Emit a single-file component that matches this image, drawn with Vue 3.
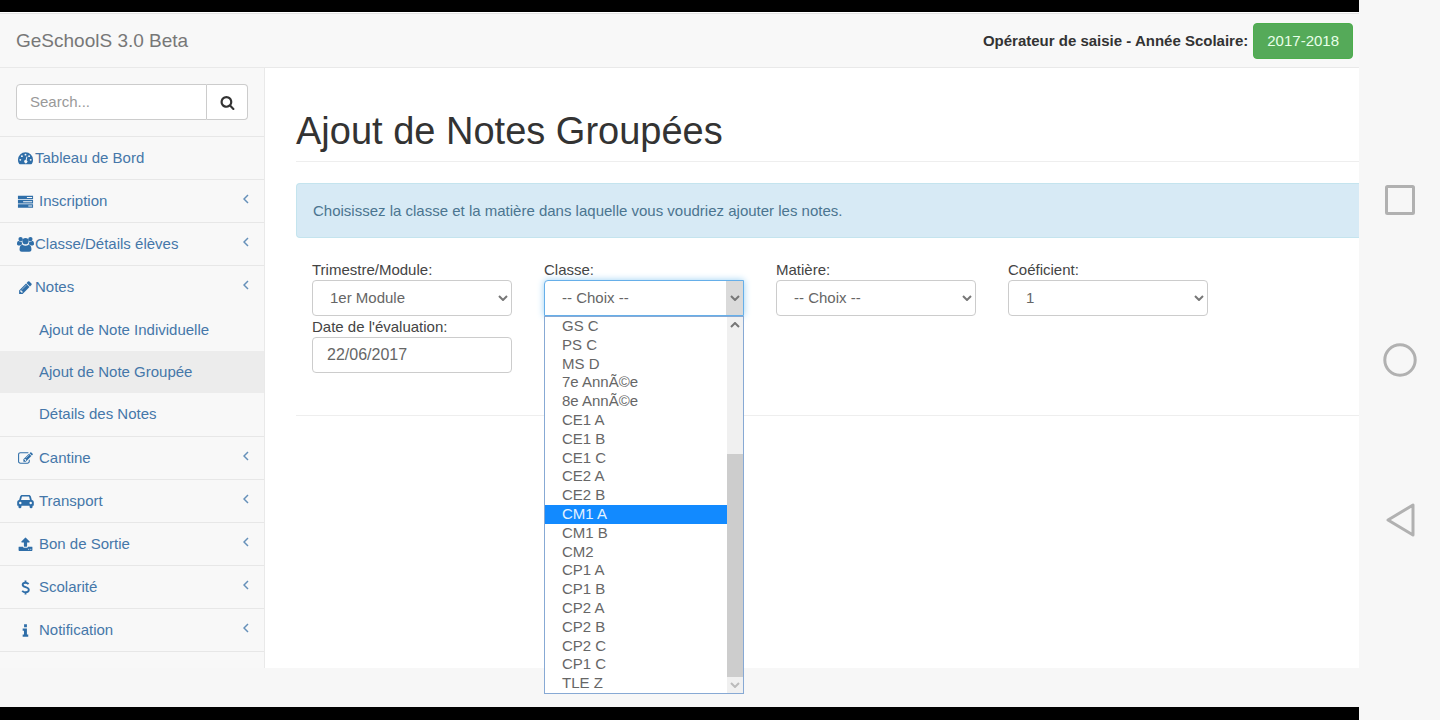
<script setup>
import { ref } from 'vue'

const menu = [
  { label: 'Tableau de Bord', icon: 'gauge', tight: true },
  { label: 'Inscription', icon: 'tasks', more: true },
  { label: 'Classe/Détails élèves', icon: 'users', tight: true, more: true },
  {
    label: 'Notes', icon: 'pencil', tight: true, more: true,
    children: [
      { label: 'Ajout de Note Individuelle' },
      { label: 'Ajout de Note Groupée', active: true },
      { label: 'Détails des Notes' }
    ]
  },
  { label: 'Cantine', icon: 'edit', more: true },
  { label: 'Transport', icon: 'car', more: true },
  { label: 'Bon de Sortie', icon: 'upload', more: true },
  { label: 'Scolarité', icon: 'dollar', more: true },
  { label: 'Notification', icon: 'info', more: true }
]

const icons = {
  gauge: { box: '0 0 18 18', d: 'M9 2.500a8 8 0 0 0-8 8c0 1.500.4 2.900 1.200 4.100.2.300.4.400.8.400h12c.4 0 .6-.1.8-.4.8-1.200 1.200-2.600 1.200-4.100a8 8 0 0 0-8-8zM3.500 9.400a1 1 0 1 1 0 2 1 1 0 0 1 0-2zm1.700-3.900a1 1 0 1 1 0 2 1 1 0 0 1 0-2zM9 3.900a1 1 0 1 1 0 2 1 1 0 0 1 0-2zm3.800 1.600a1 1 0 1 1 0 2 1 1 0 0 1 0-2zm1.700 3.900a1 1 0 1 1 0 2 1 1 0 0 1 0-2zM10.100 6.800l.9.200-.8 3.800a1.700 1.700 0 1 1-1.100-.2z' },
  tasks: { box: '0 0 18 18', d: 'M1 3h16v3.500H1zM10.500 4.200v1.100h5.500V4.200zM1 7.500h16v3.500H1zM6.500 8.700v1.100H16V8.700zM1 12h16v3.500H1zM12 13.200v1.100h4v-1.100z' },
  users: { box: '0 0 18 18', rule: 'nonzero', d: 'M3.800 1a2.300 2.300 0 1 1 0 4.600 2.300 2.300 0 0 1 0-4.600zM14.200 1a2.300 2.300 0 1 1 0 4.600 2.300 2.300 0 0 1 0-4.600zM9 2.200a3.300 3.300 0 1 1 0 6.600 3.300 3.300 0 0 1 0-6.600zM2 5.300c1 .8 2 .9 3.100.5-.2 1.200 0 2.200.6 3.100-1 0-1.800.4-2.400 1.200H1.900C.8 10.100 0 9.500 0 8.500c0-1.500.3-3.500 2-3.200zM16 5.300c-1 .8-2 .9-3.100.5.2 1.200 0 2.200-.6 3.100 1 0 1.800.4 2.400 1.200h1.400c1.100 0 1.900-.6 1.900-1.600 0-1.500-.3-3.500-2-3.200zM5.700 9.200c2 1.400 4.600 1.400 6.600 0 2.300 0 3 2.400 3 5.200 0 1.500-1 2.400-2.300 2.400H5c-1.300 0-2.300-.9-2.300-2.400 0-2.800.7-5.200 3-5.200z' },
  pencil: { box: '-128 -128 2048 2048', d: 'M491 1536l91-91-235-235-91 91v107h128v128h107zm523-928q0-22-22-22-10 0-17 7l-542 542q-7 7-7 17 0 22 22 22 10 0 17-7l542-542q7-7 7-17zm-54-192l416 416-832 832h-416v-416zm683 96q0 53-37 90l-166 166-416-416 166-165q36-38 90-38 53 0 91 38l235 234q37 39 37 91z' },
  edit: { box: '-128 -128 2048 2048', d: 'M888 1184l116-116-152-152-116 116v56h96v96h56zm440-720q-16-16-33 1l-350 350q-17 17-1 33t33-1l350-350q17-17 1-33zm80 594v190q0 119-84.500 203.500t-203.500 84.500h-832q-119 0-203.500-84.500t-84.500-203.500v-832q0-119 84.500-203.500t203.500-84.500h832q63 0 117 25 15 7 18 23 3 17-9 29l-49 49q-14 14-32 8-23-6-45-6h-832q-66 0-113 47t-47 113v832q0 66 47 113t113 47h832q66 0 113-47t47-113v-126q0-13 9-22l64-64q15-15 35-7t20 29zm-96-738l288 288-672 672h-288v-288zm444 132l-92 92-288-288 92-92q28-28 68-28t68 28l152 152q28 28 28 68t-28 68z' },
  car: { box: '0 0 18 18', d: 'M5.500 2h7c1.100 0 1.900.7 2.200 1.700l1 3.700c1.300.2 2.100 1.200 2.100 2.400v3.200c0 .3-.2.500-.5.500h-.8v1a1.600 1.600 0 0 1-3.200 0v-1H4.700v1a1.600 1.600 0 0 1-3.200 0v-1H.7c-.3 0-.5-.2-.5-.5V9.800c0-1.200.8-2.200 2.100-2.400l1-3.700C3.600 2.700 4.400 2 5.500 2zm.2 1.800c-.3 0-.5.1-.6.400l-.8 3.100h9.400l-.8-3.100c-.1-.3-.3-.4-.6-.4zM3.500 9.200a1.300 1.300 0 1 0 0 2.600 1.300 1.300 0 0 0 0-2.600zm11 0a1.300 1.300 0 1 0 0 2.600 1.300 1.300 0 0 0 0-2.600z' },
  upload: { box: '-128 -128 2048 2048', d: 'M1344 1472q0-26-19-45t-45-19-45 19-19 45 19 45 45 19 45-19 19-45zm256 0q0-26-19-45t-45-19-45 19-19 45 19 45 45 19 45-19 19-45zm128-224v320q0 40-28 68t-68 28h-1472q-40 0-68-28t-28-68v-320q0-40 28-68t68-28h427q21 56 70.500 92t110.500 36h256q61 0 110.500-36t70.500-92h427q40 0 68 28t28 68zm-325-648q-17 40-59 40h-256v448q0 26-19 45t-45 19h-256q-26 0-45-19t-19-45v-448h-256q-42 0-59-40-17-39 14-69l448-448q18-19 45-19t45 19l448 448q31 30 14 69z' },
  dollar: { box: '0 0 18 18', line: 'M12.300 5.300C11.300 4.300 10.200 3.900 9 3.900c-1.700 0-3 .9-3 2.300 0 3.100 6.500 1.900 6.500 5.300 0 1.700-1.500 2.600-3.400 2.600-1.400 0-2.700-.6-3.600-1.600M9 1.500v2.500M9 14v2.500' },
  info: { box: '0 0 18 18', d: 'M7.500 2.500h3v3h-3zM6 7h4.500v6.200h1.400v2.300H6v-2.300h1.400V9.300H6z' }
}

const classes = [
  'GS C', 'PS C', 'MS D', '7e AnnÃ©e', '8e AnnÃ©e', 'CE1 A', 'CE1 B', 'CE1 C', 'CE2 A', 'CE2 B',
  'CM1 A', 'CM1 B', 'CM2', 'CP1 A', 'CP1 B', 'CP2 A', 'CP2 B', 'CP2 C', 'CP1 C', 'TLE Z'
]
const highlighted = ref('CM1 A')

const fields = [
  { id: 'trimestre', label: 'Trimestre/Module:', value: '1er Module' },
  { id: 'classe', label: 'Classe:', value: '-- Choix --', open: true },
  { id: 'matiere', label: 'Matière:', value: '-- Choix --' },
  { id: 'coef', label: 'Coéficient:', value: '1' }
]
const date = ref('22/06/2017')
const search = ref('')
</script>

<template>
  <div class="device">
    <div class="screen">
      <header class="topbar">
        <a class="brand" href="#">GeSchoolS 3.0 Beta</a>
        <div class="session">
          <strong>Opérateur de saisie - Année Scolaire:</strong>
          <button class="year" type="button">2017-2018</button>
        </div>
      </header>

      <div class="body">
        <aside class="sidebar">
          <form class="search" @submit.prevent>
            <input v-model="search" type="text" placeholder="Search..." aria-label="Search">
            <button type="submit" aria-label="Search">
              <svg viewBox="0 0 1792 1792"><path d="M1216 832q0-185-131.500-316.500t-316.500-131.500-316.500 131.500-131.500 316.500 131.500 316.500 316.500 131.500 316.500-131.500 131.500-316.500zm512 832q0 52-38 90t-90 38q-54 0-90-38l-343-342q-179 124-399 124-143 0-273.500-55.500t-225-150-150-225-55.500-273.500 55.500-273.500 150-225 225-150 273.500-55.500 273.500 55.500 225 150 150 225 55.500 273.500q0 220-124 399l343 343q37 37 37 90z" /></svg>
            </button>
          </form>
          <nav>
            <ul class="menu">
              <li v-for="item in menu" :key="item.label">
                <a href="#" class="entry" :class="{ tight: item.tight }">
                  <svg class="icon" :viewBox="icons[item.icon].box" aria-hidden="true">
                    <path v-if="icons[item.icon].d" :d="icons[item.icon].d" :fill-rule="icons[item.icon].rule || 'evenodd'" />
                    <path v-else class="line" :d="icons[item.icon].line" />
                  </svg>
                  <span>{{ item.label }}</span>
                  <svg v-if="item.more" class="arrow" viewBox="0 0 6 10" aria-hidden="true"><path d="M5 1 1 5l4 4" /></svg>
                </a>
                <ul v-if="item.children" class="submenu">
                  <li v-for="child in item.children" :key="child.label">
                    <a href="#" :class="{ active: child.active }">{{ child.label }}</a>
                  </li>
                </ul>
              </li>
            </ul>
          </nav>
        </aside>

        <main class="content">
          <h1>Ajout de Notes Groupées</h1>
          <p class="notice">Choisissez la classe et la matière dans laquelle vous voudriez ajouter les notes.</p>
          <form class="fields" @submit.prevent>
            <div v-for="field in fields" :key="field.id" class="field">
              <label :for="field.id">{{ field.label }}</label>
              <div class="control" :class="{ open: field.open }">
                <select :id="field.id">
                  <option>{{ field.value }}</option>
                </select>
                <span class="chevron"><svg viewBox="0 0 10 6" aria-hidden="true"><path d="M1 1l4 4 4-4" /></svg></span>
                <div v-if="field.open" class="popup">
                  <ul role="listbox" aria-label="Classe">
                    <li
                      v-for="name in classes" :key="name" role="option"
                      :aria-selected="name === highlighted"
                      :class="{ highlighted: name === highlighted }"
                      @mouseenter="highlighted = name"
                    >{{ name }}</li>
                  </ul>
                  <div class="scrollbar">
                    <svg class="up" viewBox="0 0 10 6" aria-hidden="true"><path d="M1 5l4-4 4 4" /></svg>
                    <div class="thumb"></div>
                    <svg class="down" viewBox="0 0 10 6" aria-hidden="true"><path d="M1 1l4 4 4-4" /></svg>
                  </div>
                </div>
              </div>
            </div>
            <div class="field">
              <label for="date">Date de l'évaluation:</label>
              <input id="date" v-model="date" class="date" type="text">
            </div>
          </form>
          <hr>
        </main>
      </div>
    </div>

    <div class="keys">
      <button type="button" aria-label="Récents"><svg viewBox="0 0 36 36"><rect x="4.500" y="4.500" width="27" height="27" rx="1" /></svg></button>
      <button type="button" aria-label="Accueil"><svg viewBox="0 0 36 36"><circle cx="18" cy="18" r="15.200" /></svg></button>
      <button type="button" aria-label="Retour"><svg viewBox="0 0 36 36"><path d="M31 3v30L6 18z" /></svg></button>
    </div>
  </div>
</template>

<style>
body {
  margin: 0;
  background: #f7f7f7;
}
</style>

<style scoped>
* {
  box-sizing: border-box;
}

.device {
  display: flex;
  min-height: 100vh;
  font-family: "Liberation Sans", Arial, sans-serif;
  font-size: 15px;
  line-height: 22px;
  color: #444;
}

.screen {
  flex: 1;
  min-width: 0;
  display: flex;
  flex-direction: column;
  border: solid #000;
  border-width: 12px 0 13px;
  background: #f7f7f7;
}

.topbar {
  display: flex;
  align-items: center;
  justify-content: space-between;
  height: 56px;
  padding: 2px 6px 0 16px;
  border-top: 1px solid #fff;
  border-bottom: 1px solid #e9e9e9;
  background: #f8f8f8;
  box-shadow: inset 0 1px #e4e4e4;
}

.brand {
  font-size: 19px;
  color: #777;
  text-decoration: none;
}

.session {
  display: flex;
  align-items: center;
  gap: 5px;
}

.session strong {
  color: #333;
}

.year {
  height: 36px;
  padding: 0 13px;
  border: 1px solid #4cae4c;
  border-radius: 4px;
  background: #55aa59;
  font: inherit;
  color: #e8ffe8;
}

.body {
  flex: 1;
  display: flex;
  margin-bottom: 39px;
}

.sidebar {
  flex: none;
  width: 265px;
  border-right: 1px solid #e9e9e9;
  background: #f8f8f8;
}

.search {
  display: flex;
  padding: 16px;
  border-bottom: 1px solid #e7e7e7;
}

.search input {
  flex: 1;
  min-width: 0;
  height: 36px;
  padding: 0 13px 2px;
  border: 1px solid #ccc;
  border-radius: 4px 0 0 4px;
  background: #fff;
  font: inherit;
  color: #555;
}

.search input::placeholder {
  color: #999;
}

.search button {
  display: flex;
  align-items: center;
  justify-content: center;
  width: 41px;
  height: 36px;
  padding: 0;
  border: 1px solid #ccc;
  border-left: 0;
  border-radius: 0 4px 4px 0;
  background: #fff;
}

.search svg {
  width: 15px;
  height: 15px;
  fill: #333;
}

ul {
  margin: 0;
  padding: 0;
  list-style: none;
}

.menu > li {
  border-bottom: 1px solid #e7e7e7;
}

.menu a {
  color: #4577a9;
  text-decoration: none;
}

.entry {
  display: flex;
  align-items: center;
  gap: 5px;
  height: 42px;
  padding: 0 15px 0 17px;
}

.entry.tight {
  gap: 1px;
}

.icon {
  flex: none;
  width: 17px;
  height: 17px;
  fill: #2f6ea8;
}

.icon .line {
  fill: none;
  stroke: #2f6ea8;
  stroke-width: 2;
}

.arrow {
  width: 6px;
  height: 10px;
  margin: 0 0 4px auto;
  fill: none;
  stroke: #6590b9;
  stroke-width: 1.5;
}

.submenu {
  padding: 1px 0;
}

.submenu a {
  display: block;
  padding: 10px 39px;
}

.submenu .active {
  background: #ececec;
}

.content {
  flex: 1;
  min-width: 0;
  padding: 42px 0 0 31px;
  background: #fff;
}

h1 {
  margin: 0 0 21px;
  padding-bottom: 9px;
  border-bottom: 1px solid #eee;
  font-size: 38px;
  line-height: 42px;
  font-weight: 400;
  color: #333;
}

.notice {
  margin: 0 0 21px;
  padding: 16px 16px 15px;
  border: 1px solid #c4e4ee;
  border-right: 0;
  border-radius: 4px 0 0 4px;
  background: #d7eaf5;
  color: #4b7590;
}

.fields {
  display: grid;
  grid-template-columns: repeat(4, minmax(0, 1fr));
  column-gap: 32px;
  padding: 0 151px 0 16px;
}

label {
  display: block;
  line-height: 21px;
}

.control {
  position: relative;
}

select,
.date {
  display: block;
  width: 100%;
  height: 36px;
  border: 1px solid #ccc;
  border-radius: 4px;
  background: #fff;
  font: inherit;
  color: #666;
}

select {
  appearance: none;
  padding: 0 28px 0 17px;
}

.date {
  padding: 0 14px;
  font-size: 16px;
}

.chevron {
  position: absolute;
  top: 1px;
  right: 1px;
  bottom: 1px;
  width: 17px;
  display: flex;
  align-items: center;
  justify-content: center;
  pointer-events: none;
}

.chevron svg,
.scrollbar svg {
  flex: none;
  width: 10px;
  height: 6px;
  fill: none;
  stroke: #777;
  stroke-width: 2;
}

.open select {
  border-color: #66afe9;
  border-radius: 4px 0 0 0;
  box-shadow: 0 0 7px #9bd0f3;
}

.open .chevron {
  background: #dadada;
}

.popup {
  position: absolute;
  z-index: 1;
  top: 100%;
  left: 0;
  right: 0;
  display: flex;
  height: 378px;
  border: 1px solid #87a9d4;
  background: #fff;
}

.popup ul {
  flex: 1;
  display: grid;
  grid-auto-rows: 1fr;
  line-height: 18px;
  color: #666;
}

.popup li {
  min-height: 0;
  padding-left: 17px;
}

.popup .highlighted {
  background: #128aff;
  color: #e4f2ff;
}

.scrollbar {
  width: 16px;
  display: flex;
  flex-direction: column;
  align-items: center;
  justify-content: space-between;
  padding: 5px 0;
  background: #f0f0f0;
}

.scrollbar .thumb {
  width: 100%;
  height: 223px;
  margin: auto 0 5px;
  background: #cdcdcd;
}

.scrollbar .down {
  stroke: #bbb;
}

hr {
  margin: 42px 0 0;
  border: 0;
  border-top: 1px solid #eee;
}

.keys {
  flex: none;
  width: 81px;
  display: flex;
  flex-direction: column;
  align-items: center;
  justify-content: center;
  gap: 124px;
  background: #f7f7f7;
}

.keys button {
  width: 36px;
  height: 36px;
  padding: 0;
  border: 0;
  background: none;
}

.keys svg {
  display: block;
  width: 36px;
  height: 36px;
  fill: none;
  stroke: #b1b1b1;
  stroke-width: 3;
  stroke-linejoin: round;
}
</style>
